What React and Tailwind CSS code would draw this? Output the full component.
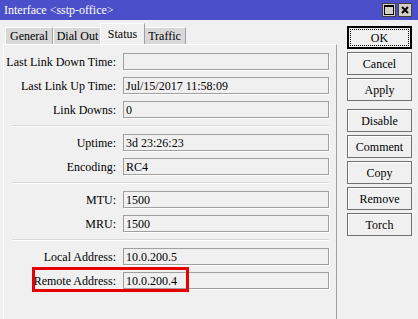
import React from 'react';

const groups = [
  [
    { label: 'Last Link Down Time:', value: '' },
    { label: 'Last Link Up Time:', value: 'Jul/15/2017 11:58:09' },
    { label: 'Link Downs:', value: '0' },
  ],
  [
    { label: 'Uptime:', value: '3d 23:26:23' },
    { label: 'Encoding:', value: 'RC4' },
  ],
  [
    { label: 'MTU:', value: '1500' },
    { label: 'MRU:', value: '1500' },
  ],
  [
    { label: 'Local Address:', value: '10.0.200.5' },
    { label: 'Remote Address:', value: '10.0.200.4', marked: true },
  ],
];

const tabs = [
  { name: 'General', w: 'w-[48px]' },
  { name: 'Dial Out', w: 'w-[49px]' },
  { name: 'Status', w: 'w-[45px]', active: true },
  { name: 'Traffic', w: 'w-[43px]' },
];

const buttons = [
  ['OK', 'Cancel', 'Apply'],
  ['Disable', 'Comment', 'Copy', 'Remove', 'Torch'],
];

const Field = ({ label, value, marked }) => (
  <div className="relative flex items-center h-[17px]">
    <span className="w-[112px] text-right leading-none whitespace-nowrap">{label}</span>
    <div className="ml-[7px] w-[206px] h-[17px] border border-[#a0a0a0] shadow-[1px_1px_0_#ffffff] flex items-center pl-[2px] leading-none whitespace-nowrap">
      {value}
    </div>
    {marked && (
      <div className="absolute left-[28px] top-[-5px] w-[157px] h-[25px] border-[3px] border-[#e80000]" />
    )}
  </div>
);

const TabButton = ({ name, w, active }) => (
  <div
    className={
      active
        ? `${w} relative z-10 -mx-[2px] h-[21px] flex items-center justify-center bg-[#f0f0f0] border-t border-l border-white border-r border-r-[#a0a0a0] leading-none`
        : `${w} h-[17px] mt-[4px] flex items-center justify-center bg-[#d8d8d8] border-t border-l border-white border-r border-r-[#a0a0a0] leading-none`
    }
  >
    {name}
  </div>
);

export default function App() {
  return (
    <div
      className="w-[418px] h-[319px] overflow-hidden bg-[#f0f0f0] text-black text-[12px] flex flex-col"
      style={{ fontFamily: '"Liberation Serif", "Times New Roman", serif' }}
    >
      {/* Title bar */}
      <div className="h-[20px] shrink-0 bg-[#4b4fc9] flex items-center justify-between pl-[4px] pr-[6px]">
        <span className="text-white text-[12px] leading-none">Interface &lt;sstp-office&gt;</span>
        <div className="flex gap-[2px]">
          <div className="w-[14px] h-[14px] bg-[#d4d0c8] border border-[#404040] flex items-center justify-center">
            <svg width="10" height="10" viewBox="0 0 10 10">
              <rect x="0.5" y="0.5" width="9" height="9" fill="none" stroke="#000" />
              <rect x="0" y="0" width="10" height="2" fill="#000" />
            </svg>
          </div>
          <div className="w-[14px] h-[14px] bg-[#d4d0c8] border border-[#404040] flex items-center justify-center">
            <svg width="8" height="8" viewBox="0 0 8 8">
              <path d="M1 1 L7 7 M7 1 L1 7" stroke="#000" strokeWidth="2" />
            </svg>
          </div>
        </div>
      </div>

      <div className="flex flex-1 min-h-0">
        {/* Left: tabs + panel */}
        <div className="ml-[3px] w-[334px] flex flex-col">
          <div className="flex pl-[2px] mt-[3px] h-[21px]">
            {tabs.map((t) => (
              <TabButton key={t.name} {...t} />
            ))}
          </div>
          <div className="flex-1 border-t border-l border-white border-r border-r-[#a0a0a0] pt-[8px] flex flex-col">
            {groups.map((g, gi) => (
              <React.Fragment key={gi}>
                {gi > 0 && (
                  <div className="ml-[8px] w-[317px] h-[2px] my-[7px] border-t border-[#d8d8d8] border-b border-b-white" />
                )}
                <div className="flex flex-col gap-[7px]">
                  {g.map((f) => (
                    <Field key={f.label} {...f} />
                  ))}
                </div>
              </React.Fragment>
            ))}
          </div>
        </div>

        {/* Right: buttons */}
        <div className="ml-[10px] mt-[6px] w-[65px] flex flex-col gap-[8px]">
          {buttons.map((grp, gi) => (
            <div key={gi} className="flex flex-col gap-[3px]">
              {grp.map((b) =>
                b === 'OK' ? (
                  <div key={b} className="h-[23px] border-2 border-black p-[1px] bg-[#f0f0f0]">
                    <div className="w-full h-full border border-dotted border-black flex items-center justify-center leading-none">
                      {b}
                    </div>
                  </div>
                ) : (
                  <div
                    key={b}
                    className="h-[23px] border border-[#707070] bg-[#f0f0f0] shadow-[inset_1px_1px_0_#ffffff] flex items-center justify-center leading-none"
                  >
                    {b}
                  </div>
                )
              )}
            </div>
          ))}
        </div>
      </div>
    </div>
  );
}
